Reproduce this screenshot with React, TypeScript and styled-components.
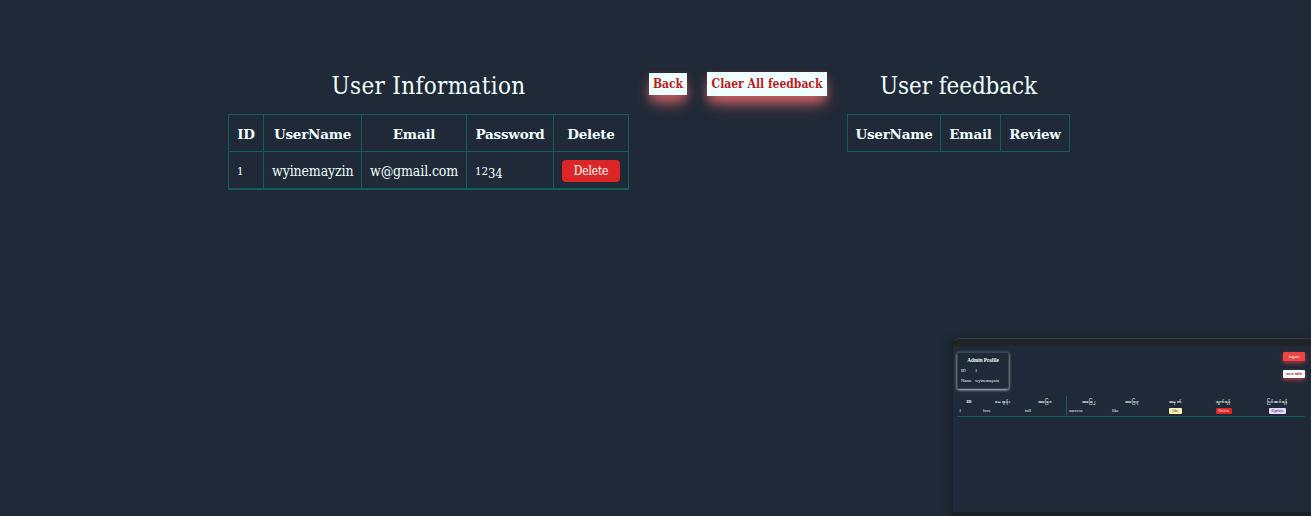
import React from "react";
import styled, { createGlobalStyle } from "styled-components";

const serif = `Georgia, "DejaVu Serif Condensed", "DejaVu Serif", serif`;
const wideSerif = `Georgia, "DejaVu Serif", serif`;
const Global = createGlobalStyle`
  * { box-sizing: border-box; }
  body { margin: 0; background: #202937; color: azure; overflow: hidden;
    font-family: ${serif}; font-stretch: condensed; font-size: 14px; line-height: 20px; }
`;
const Page = styled.main`position: relative; height: 516px; overflow: hidden; padding-top: 70px; background: #202937;`;
const Columns = styled.div`display: flex; align-items: flex-start; margin-left: 228px;`;
const Section = styled.section<{ $w: number }>`width: ${p => p.$w}px; flex: none;`;
const Title = styled.h1<{ $s: number }>`margin: 0 0 12px; height: 32px; line-height: 32px; font-weight: 400; font-size: 24px; letter-spacing: ${p => p.$s}px; text-align: center; white-space: nowrap;`;
const Table = styled.table`width: 100%; table-layout: fixed; border-collapse: collapse; border: 1px solid #115e59;`;
const Th = styled.th`height: 37px; padding: 2px 0 0; border: 1px solid #115e59; font: 700 13.5px/20px ${wideSerif}; font-stretch: normal; letter-spacing: -0.25px; text-align: center; white-space: nowrap;`;
const Td = styled.td`height: 37px; padding: 2px 0 0 8px; border: 1px solid #115e59; border-bottom-width: 2px; letter-spacing: -0.13px; white-space: nowrap;`;
const Low = styled.span`display: inline-block; font-size: 13px; line-height: 16px; transform: translateY(3px);`;
const Small = styled.span`display: inline-block; font-size: 11.5px;`;
const Delete = styled.button`display: block; width: 58px; height: 22px; margin: 0; padding: 0; border: 0; border-radius: 4px; background: #dc2626; color: azure; font: 12px/22px ${serif}; font-stretch: condensed; letter-spacing: -0.2px;`;
const Actions = styled.nav`width: 218px; padding: 2px 0 0 20px; display: flex; align-items: center; gap: 20px; flex: none;`;
const Action = styled.button<{ $w: number; $h: number }>`width: ${p => p.$w}px; height: ${p => p.$h}px; padding: 0; border: 0; background: azure; color: #b91c1c; white-space: nowrap;
  font: 700 12px/20px ${serif}; font-stretch: condensed; box-shadow: 0 10px 15px -3px #f87171cc, 0 4px 8px #f8717155;`;

const Preview = styled.aside`position: absolute; left: 952px; top: 338px; width: 375px; height: 190px; border: 1px solid #3a3e42; border-width: 1px 0 0 1px; border-left-color: #1a2028; border-radius: 8px 0 0 0;
  background: #202937; box-shadow: -2px 0 8px #151c2580; font-size: 4.5px; line-height: 6px; font-family: "Liberation Serif", serif;`;
const TopBezel = styled.div`height: 7px; background: #1e2328; border-radius: 7px 0 0 0;`;
const Screen = styled.div`height: 166px; padding: 6px 0 0 4px;`;
const BottomBezel = styled.div`height: 12px; background: #1b2027;`;
const Head = styled.div`display: flex; justify-content: space-between; width: 348px; height: 44px;`;
const Card = styled.div`width: 52px; height: 37px; border: 1px solid #394550; border-radius: 2px; box-shadow: 0 1px 3px #c4cfd0; background: #202937; padding: 4px 3px;`;
const CardTitle = styled.div`text-align: center; font-size: 5.2px; line-height: 6px; margin-bottom: 5px; font-weight: 700;`;
const CardRow = styled.div`display: grid; grid-template-columns: 14px auto; font-size: 4.5px; line-height: 6px; margin-bottom: 4px;`;
const Buttons = styled.div`display: flex; flex-direction: column; gap: 9px;`;
const Mini = styled.div<{ $bg: string; $c: string; $w: number; $h: number; $glow?: boolean; $bold?: boolean }>`display: inline-block; width: ${p => p.$w}px; height: ${p => p.$h}px; line-height: ${p => p.$h}px; background: ${p => p.$bg}; color: ${p => p.$c}; text-align: center; font-size: 4.2px; font-weight: ${p => p.$bold ? 700 : 400}; border-radius: 1px;
  box-shadow: ${p => p.$glow ? "0 2px 4px #ef4444aa" : "none"}; vertical-align: top;`;
const MiniGrid = styled.div`display: grid; width: 348px; grid-template-columns: 24px 42px 43px 44px 43px 44px 53px 55px; border-bottom: 1px solid #115e59;`;
const Cell = styled.div<{ $head?: boolean; $pad?: number; $line?: boolean; $drop?: number }>`height: 10px; line-height: 10px; padding: ${p => p.$drop ?? 0}px 0 0 ${p => p.$pad ?? 0}px; text-align: ${p => p.$head ? "center" : "left"}; font-weight: ${p => p.$head ? 700 : 400}; border-left: ${p => p.$line ? "1px solid #115e59" : "0"}; white-space: nowrap;`;

const headings = ["ID", "မေးခွန်း", "အဖြေ၁", "အဖြေ၂", "အဖြေ၃", "အမှတ်", "ဖျက်ရန်", "ပြင်ဆင်ရန်"];

export default function App() {
  return <><Global /><Page>
    <Columns>
      <Section $w={401}>
        <Title $s={0.32}>User Information</Title>
        <Table>
          <colgroup><col style={{ width: 35 }} /><col style={{ width: 98 }} /><col style={{ width: 105 }} /><col style={{ width: 87 }} /><col style={{ width: 75 }} /></colgroup>
          <thead><tr><Th>ID</Th><Th>UserName</Th><Th>Email</Th><Th>Password</Th><Th>Delete</Th></tr></thead>
          <tbody><tr><Td><Small>1</Small></Td><Td>wyinemayzin</Td><Td>w@gmail.com</Td><Td><Small>12</Small><Low>34</Low></Td><Td><Delete>Delete</Delete></Td></tr></tbody>
        </Table>
      </Section>
      <Actions><Action $w={38} $h={22}>Back</Action><Action $w={120} $h={24}>Claer All feedback</Action></Actions>
      <Section $w={223}>
        <Title $s={-0.1}>User feedback</Title>
        <Table>
          <colgroup><col style={{ width: 93 }} /><col style={{ width: 60 }} /><col style={{ width: 69 }} /></colgroup>
          <thead><tr><Th>UserName</Th><Th>Email</Th><Th>Review</Th></tr></thead>
        </Table>
      </Section>
    </Columns>
    <Preview>
      <TopBezel />
      <Screen>
        <Head>
          <Card><CardTitle>Admin Profile</CardTitle><CardRow><span>ID</span><span>1</span></CardRow><CardRow><span>Name</span><span>wyinemayzin</span></CardRow></Card>
          <Buttons><Mini $bg="#ef4444" $c="azure" $w={22} $h={9} $glow>logout</Mini><Mini $bg="azure" $c="#b91c1c" $w={22} $h={8} $glow $bold>user info</Mini></Buttons>
        </Head>
        <MiniGrid>
          {headings.map((t, i) => <Cell key={t} $head $line={i === 3} $drop={1}>{t}</Cell>)}
          <Cell $pad={2}>1</Cell><Cell $pad={2}>love</Cell><Cell $pad={2}>fall</Cell><Cell $pad={2} $line>success</Cell><Cell $pad={2}>like</Cell>
          <Cell $pad={16} $drop={2}><Mini $bg="#fef3b5" $c="#333" $w={13} $h={6}>like</Mini></Cell>
          <Cell $pad={19} $drop={2}><Mini $bg="#dc2626" $c="azure" $w={16} $h={6}>Delete</Mini></Cell>
          <Cell $pad={19} $drop={2}><Mini $bg="#e9d5ff" $c="#333" $w={17} $h={6}>Update</Mini></Cell>
        </MiniGrid>
      </Screen>
      <BottomBezel />
    </Preview>
  </Page></>;
}
